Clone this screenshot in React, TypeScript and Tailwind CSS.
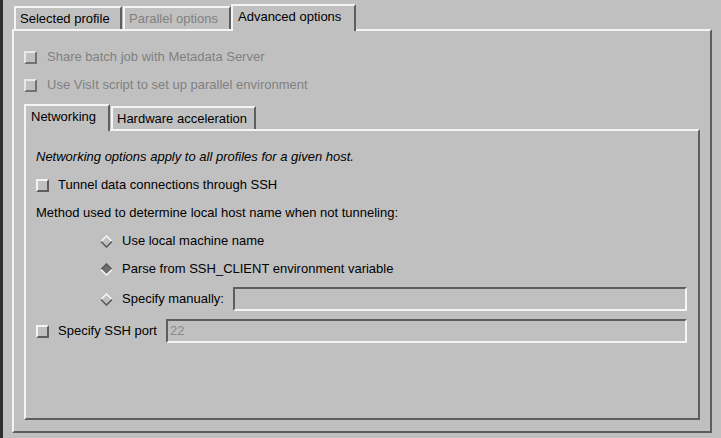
import React from "react";

const LIGHT = "border-[#f4f4f4]";

function CheckBox({ disabled }: { disabled?: boolean }) {
  return (
    <span
      className={`inline-block w-[13px] h-[13px] shrink-0 border-t-2 border-l-2 ${LIGHT} border-b-2 border-r-2 border-b-[#5e5e5e] border-r-[#5e5e5e] bg-[#c0c0c0] ${
        disabled ? "opacity-80" : ""
      }`}
    />
  );
}

function Diamond({ checked }: { checked?: boolean }) {
  const top = checked ? "#5a5a5a" : "#f4f4f4";
  const bottom = checked ? "#f4f4f4" : "#5a5a5a";
  return (
    <svg width="13" height="13" viewBox="0 0 13 13" className="shrink-0">
      <polygon points="6.5,1 12,6.5 6.5,12 1,6.5" fill={checked ? "#6e6e6e" : "#c0c0c0"} />
      <polyline points="1,6.5 6.5,1 12,6.5" fill="none" stroke={top} strokeWidth="1.6" />
      <polyline points="1,6.5 6.5,12 12,6.5" fill="none" stroke={bottom} strokeWidth="1.6" />
    </svg>
  );
}

function Field({ value }: { value?: string }) {
  return (
    <div className="flex-1 h-[24px] border-t-2 border-l-2 border-[#5e5e5e] border-b-2 border-r-2 border-b-[#f4f4f4] border-r-[#f4f4f4] bg-[#c0c0c0] flex items-center pl-[2px] text-[#8a8a8a]">
      {value}
    </div>
  );
}

function Tab({
  label,
  selected,
  disabled,
  width,
}: {
  label: string;
  selected?: boolean;
  disabled?: boolean;
  width: string;
}) {
  if (selected) {
    return (
      <div
        className={`${width} h-[27px] -mb-[2px] relative z-10 bg-[#c0c0c0] border-t-2 border-l-2 ${LIGHT} border-r-2 border-r-[#5e5e5e] flex items-start pt-[2px] pl-[5px] leading-[18px]`}
      >
        {label}
      </div>
    );
  }
  return (
    <div
      className={`${width} h-[23px] bg-[#c0c0c0] border-t-2 border-l-2 ${LIGHT} border-r-2 border-r-[#5e5e5e] flex items-start pt-[2px] pl-[4px] leading-[18px] ${
        disabled ? "text-[#808080]" : ""
      }`}
    >
      {label}
    </div>
  );
}

export default function App() {
  return (
    <div className="w-[721px] h-[438px] bg-[#c0c0c0] flex overflow-hidden text-[13px] text-black font-['Liberation_Sans',Arial,sans-serif]">
      <div className="w-[3px] bg-[#2e2e2e]" />
      <div className="flex-1 flex flex-col pl-[9px] pr-[9px] pt-[4px] pb-[5px]">
        {/* outer tab bar */}
        <div className="flex items-end h-[25px] pl-[2px]">
          <Tab label="Selected profile" width="w-[108px]" />
          <div className="w-[1px]" />
          <Tab label="Parallel options" width="w-[108px]" disabled />
          <Tab label="Advanced options" width="w-[125px]" selected />
        </div>

        {/* outer pane */}
        <div className={`flex-1 flex flex-col border-t-2 border-l-2 ${LIGHT} border-b-2 border-r-2 border-b-[#5e5e5e] border-r-[#5e5e5e] pt-[12px] pl-[10px] pr-[10px] pb-[11px]`}>
          <div className="h-[28px] flex items-center gap-[10px] text-[#808080]">
            <CheckBox disabled />
            <span>Share batch job with Metadata Server</span>
          </div>
          <div className="h-[28px] flex items-center gap-[10px] text-[#808080]">
            <CheckBox disabled />
            <span>Use VisIt script to set up parallel environment</span>
          </div>

          {/* inner tab bar */}
          <div className="flex items-end h-[25px] mt-[5px]">
            <Tab label="Networking" width="w-[86px]" selected />
            <div className="w-[1px]" />
            <Tab label="Hardware acceleration" width="w-[145px]" />
          </div>

          {/* inner pane */}
          <div className={`flex-1 flex flex-col border-t-2 border-l-2 ${LIGHT} border-b-2 border-r-2 border-b-[#5e5e5e] border-r-[#5e5e5e] pt-[12px] pl-[10px] pr-[11px]`}>
            <div className="h-[28px] flex items-center italic">
              Networking options apply to all profiles for a given host.
            </div>
            <div className="h-[28px] flex items-center gap-[9px]">
              <CheckBox />
              <span>Tunnel data connections through SSH</span>
            </div>
            <div className="h-[28px] flex items-center">
              Method used to determine local host name when not tunneling:
            </div>
            <div className="h-[28px] flex items-center gap-[9px] pl-[64px]">
              <Diamond />
              <span>Use local machine name</span>
            </div>
            <div className="h-[28px] flex items-center gap-[9px] pl-[64px]">
              <Diamond checked />
              <span>Parse from SSH_CLIENT environment variable</span>
            </div>
            <div className="h-[24px] mt-[4px] flex items-center pl-[64px]">
              <Diamond />
              <span className="ml-[9px] mr-[9px]">Specify manually:</span>
              <Field />
            </div>
            <div className="h-[24px] mt-[8px] flex items-center">
              <CheckBox />
              <span className="ml-[9px] mr-[9px]">Specify SSH port</span>
              <Field value="22" />
            </div>
          </div>
        </div>
      </div>
    </div>
  );
}
